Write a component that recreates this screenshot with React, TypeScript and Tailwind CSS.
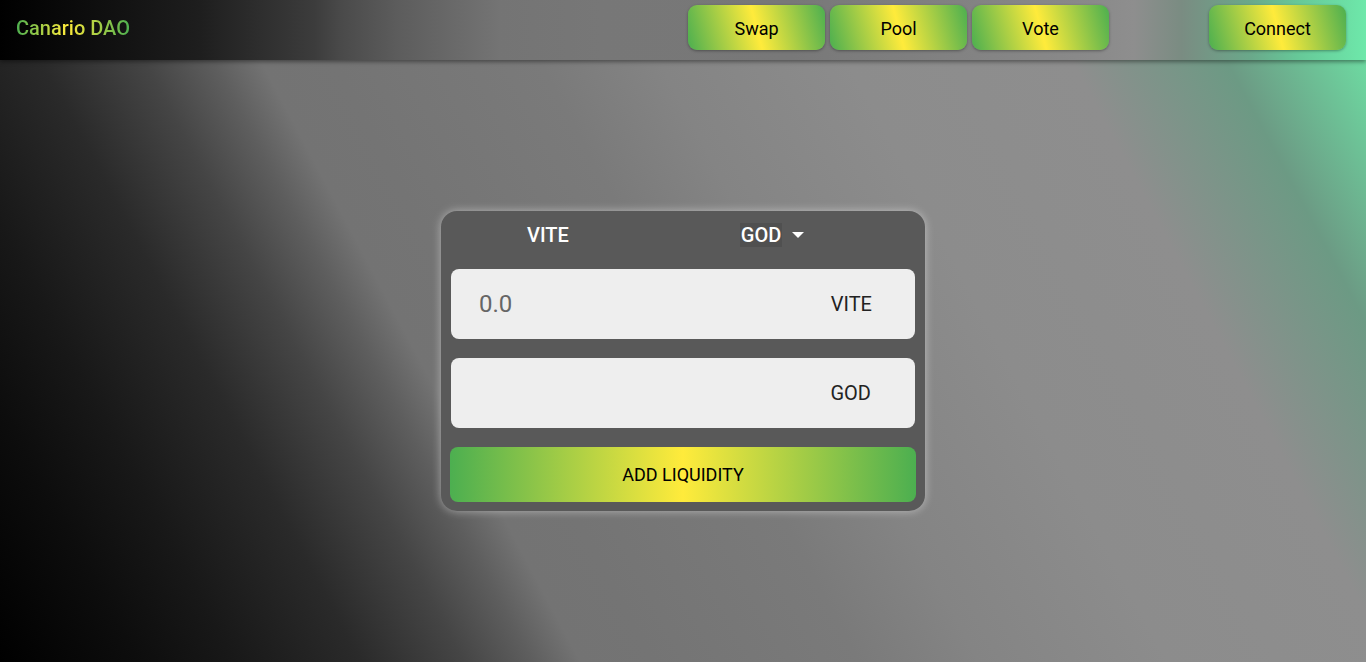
import React from "react";

const navBtn =
  "w-[137px] h-[45px] pt-[2px] rounded-[9px] bg-[linear-gradient(75deg,#4caf50_0%,#ffeb3b_50%,#4caf50_100%)] text-black text-[18px] font-normal shadow-[0_1px_3px_rgba(0,0,0,0.35)] flex items-center justify-center";

export default function App() {
  return (
    <div
      className="h-[662px] w-full flex flex-col overflow-hidden bg-[linear-gradient(62deg,#000_0%,#0d0d0d_8%,#181818_13.6%,#2a2a2a_21%,#454545_27%,#5e5e5e_31%,#737373_33.8%,#747474_38%,#7a7a7a_50%,#848484_57%,#8c8c8c_68%,#8e8e8e_81%,#6c9a84_90%,#6ee8a8_100%)]"
      style={{ fontFamily: "Roboto, 'Noto Sans', sans-serif" }}
    >
      <header className="relative z-10 h-[60px] shrink-0 flex items-start pt-[5px] pl-4 pr-5 bg-[linear-gradient(90deg,#000_0%,#1e1e1e_14.6%,#3c3c3c_23%,#4a4a4a_25%,#5c5c5c_29%,#747474_36.6%,#777_44%,#787878_58%,#8a8a8a_80%,#8e8e8e_83%,#7a8c82_86.5%,#6aa88a_91.5%,#66c898_95%,#6ee8aa_100%)] shadow-[0_2px_4px_rgba(0,0,0,0.4)]">
        <div className="mt-[13px] text-[20px] leading-[20px] font-medium bg-[linear-gradient(90deg,#4caf50_0%,#ffeb3b_45%,#4caf50_100%)] bg-clip-text text-transparent">
          Canario DAO
        </div>
        <div className="flex-1" />
        <nav className="flex gap-[5px]">
          <button className={navBtn}>Swap</button>
          <button className={navBtn}>Pool</button>
          <button className={navBtn}>Vote</button>
        </nav>
        <div className="w-[100px]" />
        <button className={navBtn}>Connect</button>
      </header>

      <main className="flex-1 flex items-center justify-center">
        <div className="w-[484px] rounded-[16px] bg-[#595959] shadow-[0_0_10px_rgba(255,255,255,0.45)] px-[10px] pb-[9px]">
          <div className="h-[48px] mb-[10px] flex items-center text-white text-[20px] font-medium">
            <span className="ml-[76px]">VITE</span>
            <span className="ml-[171px] flex items-center">
              <span className="bg-[#505050] px-[1px] leading-[24px]">GOD</span>
              <svg width="12" height="6" viewBox="0 0 12 6" className="ml-[10px]">
                <path d="M0 0h12L6 6z" fill="#fff" />
              </svg>
            </span>
          </div>
          <div className="h-[70px] rounded-[8px] bg-[#eeeeee] flex items-center pl-[28px] pr-[43px]">
            <span className="flex-1 text-[24px] text-[#666]">0.0</span>
            <span className="text-[20px] text-[#222]">VITE</span>
          </div>
          <div className="h-[70px] mt-[19px] rounded-[8px] bg-[#eeeeee] flex items-center pl-[28px] pr-[44px]">
            <span className="flex-1" />
            <span className="text-[20px] text-[#222]">GOD</span>
          </div>
          <button className="mt-[19px] -mx-[1px] w-[466px] h-[55px] rounded-[8px] bg-[linear-gradient(90deg,#4caf50_0%,#ffeb3b_50%,#4caf50_100%)] text-black text-[18px] font-normal flex items-center justify-center">
            ADD LIQUIDITY
          </button>
        </div>
      </main>
    </div>
  );
}
